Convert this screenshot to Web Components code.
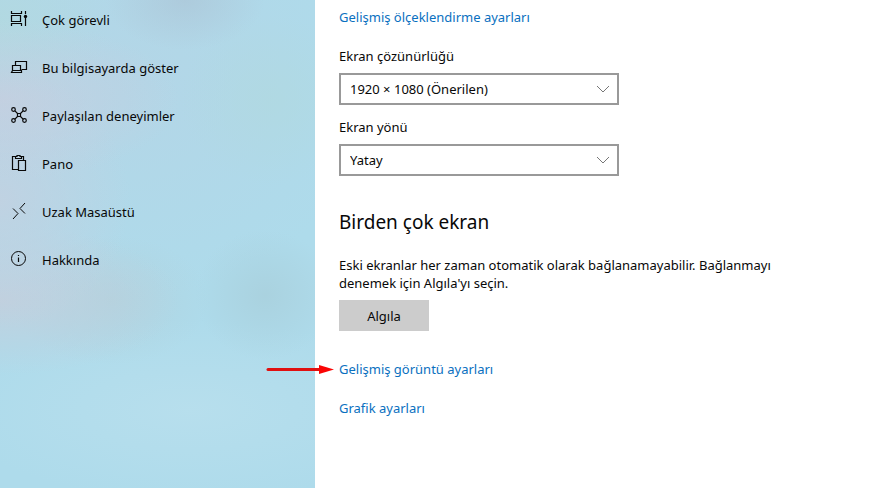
<!DOCTYPE html>
<html lang="tr">
<head>
<meta charset="utf-8">
<meta name="viewport" content="width=device-width, initial-scale=1">
<title>Ekran</title>
<style>
  body {
    margin: 0;
    background: #fff;
    color: #080808;
    font: 13px/18px "Noto Sans", "Open Sans", sans-serif;
  }
</style>
</head>
<body>
<settings-page>
  <settings-nav slot="nav">
    <nav-item icon="multitask">Çok görevli</nav-item>
    <nav-item icon="project">Bu bilgisayarda göster</nav-item>
    <nav-item icon="share">Paylaşılan deneyimler</nav-item>
    <nav-item icon="clipboard">Pano</nav-item>
    <nav-item icon="remote">Uzak Masaüstü</nav-item>
    <nav-item icon="about">Hakkında</nav-item>
  </settings-nav>

  <settings-group>
    <settings-link>Gelişmiş ölçeklendirme ayarları</settings-link>
  </settings-group>
  <settings-group class="fields">
    <settings-select label="Ekran çözünürlüğü" value="1920 × 1080 (Önerilen)"></settings-select>
    <settings-select label="Ekran yönü" value="Yatay"></settings-select>
  </settings-group>
  <detect-section heading="Birden çok ekran" action="Algıla">
    Eski ekranlar her zaman otomatik olarak bağlanamayabilir. Bağlanmayı denemek için Algıla'yı seçin.
  </detect-section>
  <settings-group>
    <settings-link marked>Gelişmiş görüntü ayarları</settings-link>
    <settings-link>Grafik ayarları</settings-link>
  </settings-group>
</settings-page>

<script>
const icons = {
  multitask: `
    <path d="M2.5 3v2.5h10V3M2.5 18v-2.5h10V18M2.5 7.5h9v6h-9zM16.5 3v3M16.5 10v8"/>
    <circle cx="16.5" cy="8.5" r="1.7" fill="currentColor" stroke="none"/>`,
  project: `
    <path d="M6.5 9V5.5h11v8h-5M3.5 14.5v-5h8v5M3.5 14.5l-1 2h10v-2z"/>`,
  share: `
    <circle cx="4.5" cy="5.5" r="1.8"/><circle cx="15.5" cy="5.5" r="1.8"/>
    <circle cx="4.5" cy="16.5" r="1.8"/><circle cx="15.5" cy="16.5" r="1.8"/>
    <path d="M8.5 9.5h3v3h-3zM5.7 6.7l2.8 2.8M14.3 6.7l-2.8 2.8M5.7 15.3l2.8-2.8M14.3 15.3l-2.8-2.8"/>`,
  clipboard: `
    <path d="M9 17.5H3.5v-13h3M12.5 4.5h2V8M9.5 8.5h7v10h-7z"/>
    <path d="M6 6.5h7M6.5 6.5v-2H8v-1h3v1h1.5v2"/>`,
  remote: `<path d="M4 8.5l5 5-5 5.5M16 3l-5 5.5 5 5" stroke-width="1"/>`,
  about: `
    <circle cx="9.5" cy="10.5" r="7" stroke-width="1"/>
    <path d="M9.5 9.5V14M9.5 7v1"/>`
};

class SettingsPage extends HTMLElement {
  constructor() {
    super();
    this.attachShadow({ mode: "open" }).innerHTML = `
      <style>
        :host {
          display: flex;
          min-height: 100vh;
        }
        aside {
          flex: 0 0 315px;
          background:
            radial-gradient(ellipse 80px 50px at 185px 0, rgba(170, 190, 208, .5), transparent),
            radial-gradient(ellipse 180px 80px at 0 100px, rgba(201, 205, 222, .7), transparent),
            radial-gradient(ellipse 130px 130px at 0 200px, rgba(196, 208, 224, .8), transparent),
            radial-gradient(ellipse 180px 75px at 0 300px, rgba(194, 207, 221, .9), transparent),
            radial-gradient(ellipse 100px 65px at 110px 300px, rgba(178, 206, 215, .6), transparent),
            radial-gradient(ellipse 70px 65px at 265px 295px, rgba(168, 206, 218, .7), transparent),
            radial-gradient(ellipse 90px 85px at 270px 100px, rgba(176, 217, 224, .7), transparent),
            radial-gradient(ellipse 110px 90px at 0 20px, rgba(178, 217, 222, .7), transparent),
            radial-gradient(ellipse 240px 90px at 190px 410px, rgba(184, 223, 237, .9), transparent),
            radial-gradient(ellipse 260px 220px at 120px 80px, rgba(180, 213, 230, .9), transparent),
            #aedbeb;
        }
        main {
          flex: 1;
          min-width: 0;
          padding: 8px 24px;
        }
      </style>
      <aside><slot name="nav"></slot></aside>
      <main><slot></slot></main>
    `;
  }
}

class SettingsNav extends HTMLElement {
  constructor() {
    super();
    this.attachShadow({ mode: "open" }).innerHTML = `
      <style>
        :host { display: block; }
        nav {
          display: flex;
          flex-direction: column;
          gap: 8px;
        }
      </style>
      <nav><slot></slot></nav>
    `;
  }
}

class NavItem extends HTMLElement {
  constructor() {
    super();
    this.attachShadow({ mode: "open" });
  }

  connectedCallback() {
    this.shadowRoot.innerHTML = `
      <style>
        :host { display: block; }
        a {
          display: flex;
          align-items: center;
          gap: 13px;
          height: 40px;
          padding: 0 9px;
          color: inherit;
          text-decoration: none;
        }
        svg {
          flex: none;
          fill: none;
          stroke: currentColor;
          stroke-width: 1.2;
        }
      </style>
      <a href="#">
        <svg width="20" height="24" viewBox="0 0 20 24" aria-hidden="true">${icons[this.getAttribute("icon")]}</svg>
        <span><slot></slot></span>
      </a>
    `;
  }
}

class SettingsGroup extends HTMLElement {
  constructor() {
    super();
    this.attachShadow({ mode: "open" }).innerHTML = `
      <style>
        :host {
          display: flex;
          flex-direction: column;
          align-items: flex-start;
          gap: 21px;
          margin-bottom: 21px;
        }
        :host(.fields) {
          align-items: stretch;
          gap: 13px;
          max-width: 280px;
          margin-bottom: 32px;
        }
      </style>
      <slot></slot>
    `;
  }
}

class SettingsLink extends HTMLElement {
  constructor() {
    super();
    this.attachShadow({ mode: "open" });
  }

  connectedCallback() {
    // a marked link gets a red arrow that points at it from the left
    const arrow = `
      <svg width="70" height="10" viewBox="0 0 70 10" aria-hidden="true">
        <path d="M3 4.5H56" stroke="#e01010" stroke-width="3" stroke-linecap="round"/>
        <path d="M54 0l15 4.5L54 9z" fill="#fa0505"/>
      </svg>`;

    this.shadowRoot.innerHTML = `
      <style>
        :host {
          display: block;
          position: relative;
        }
        a {
          color: #0a70c0;
          text-decoration: none;
        }
        svg {
          position: absolute;
          right: 100%;
          top: 5px;
          margin-right: 4px;
        }
      </style>
      ${this.hasAttribute("marked") ? arrow : ""}
      <a href="#"><slot></slot></a>
    `;
  }
}

class SettingsSelect extends HTMLElement {
  constructor() {
    super();
    this.attachShadow({ mode: "open" });
  }

  connectedCallback() {
    this.shadowRoot.innerHTML = `
      <style>
        :host { display: block; }
        label {
          display: block;
          margin-bottom: 8px;
        }
        .box { position: relative; }
        select {
          appearance: none;
          display: block;
          box-sizing: border-box;
          width: 100%;
          height: 32px;
          padding: 0 32px 0 9px;
          border: 2px solid #999;
          border-radius: 0;
          background: #fff;
          color: inherit;
          font: inherit;
        }
        svg {
          position: absolute;
          right: 9px;
          top: 12px;
          fill: none;
          stroke: #777;
          pointer-events: none;
        }
      </style>
      <label for="field">${this.getAttribute("label")}</label>
      <div class="box">
        <select id="field"><option>${this.getAttribute("value")}</option></select>
        <svg width="14" height="8" viewBox="0 0 14 8" aria-hidden="true"><path d="M1 1l6 6 6-6"/></svg>
      </div>
    `;
  }
}

class DetectSection extends HTMLElement {
  constructor() {
    super();
    this.attachShadow({ mode: "open" });
  }

  connectedCallback() {
    this.shadowRoot.innerHTML = `
      <style>
        :host {
          display: block;
          max-width: 440px;
          margin-bottom: 29px;
        }
        h2 {
          margin: 0 0 20px;
          font-size: 19px;
          font-weight: 400;
          line-height: 28px;
        }
        p { margin: 0 0 8px; }
        button {
          min-width: 90px;
          height: 31px;
          padding: 0 16px;
          border: 0;
          background: #ccc;
          color: inherit;
          font: inherit;
        }
      </style>
      <h2>${this.getAttribute("heading")}</h2>
      <p><slot></slot></p>
      <button type="button">${this.getAttribute("action")}</button>
    `;
  }
}

customElements.define("settings-page", SettingsPage);
customElements.define("settings-nav", SettingsNav);
customElements.define("nav-item", NavItem);
customElements.define("settings-group", SettingsGroup);
customElements.define("settings-link", SettingsLink);
customElements.define("settings-select", SettingsSelect);
customElements.define("detect-section", DetectSection);
</script>
</body>
</html>
